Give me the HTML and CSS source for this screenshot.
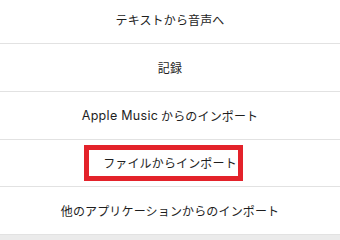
FILE: index.html
```html
<!DOCTYPE html>
<html lang="ja">
<head>
<meta charset="utf-8">
<link rel="stylesheet" href="styles.css">
</head>
<body>
<div class="page">
  <ul class="menu">
    <li class="item">テキストから音声へ</li>
    <li class="item">記録</li>
    <li class="item"><span class="latin">Apple Music</span>&nbsp;からのインポート</li>
    <li class="item">ファイルからインポート</li>
    <li class="item">他のアプリケーションからのインポート</li>
  </ul>
  <div class="highlight"></div>
</div>
</body>
</html>
```
FILE: styles.css
```css
html, body {
  margin: 0;
  padding: 0;
  background: #ebebeb;
}
.page {
  position: relative;
  width: 340px;
  height: 240px;
  overflow: hidden;
  background: #ebebeb;
}
.menu {
  list-style: none;
  margin: -3.75px 0 0 0;
  padding: 0;
  background: #ffffff;
}
.item {
  box-sizing: border-box;
  height: 47.75px;
  border-bottom: 1px solid #e2e2e2;
  display: flex;
  align-items: center;
  justify-content: center;
  font-family: "Noto Sans CJK JP", "Noto Sans", sans-serif;
  font-size: 12px;
  letter-spacing: 0.15px;
  color: #1e1e1e;
  background: #ffffff;
}
.latin {
  font-family: "Inter", "Noto Sans CJK JP", sans-serif;
  font-size: 12.5px;
  letter-spacing: 0.3px;
}
.highlight {
  position: absolute;
  left: 84px;
  top: 145px;
  width: 159px;
  height: 36px;
  box-sizing: border-box;
  border: 5px solid #e3222a;
}
```
